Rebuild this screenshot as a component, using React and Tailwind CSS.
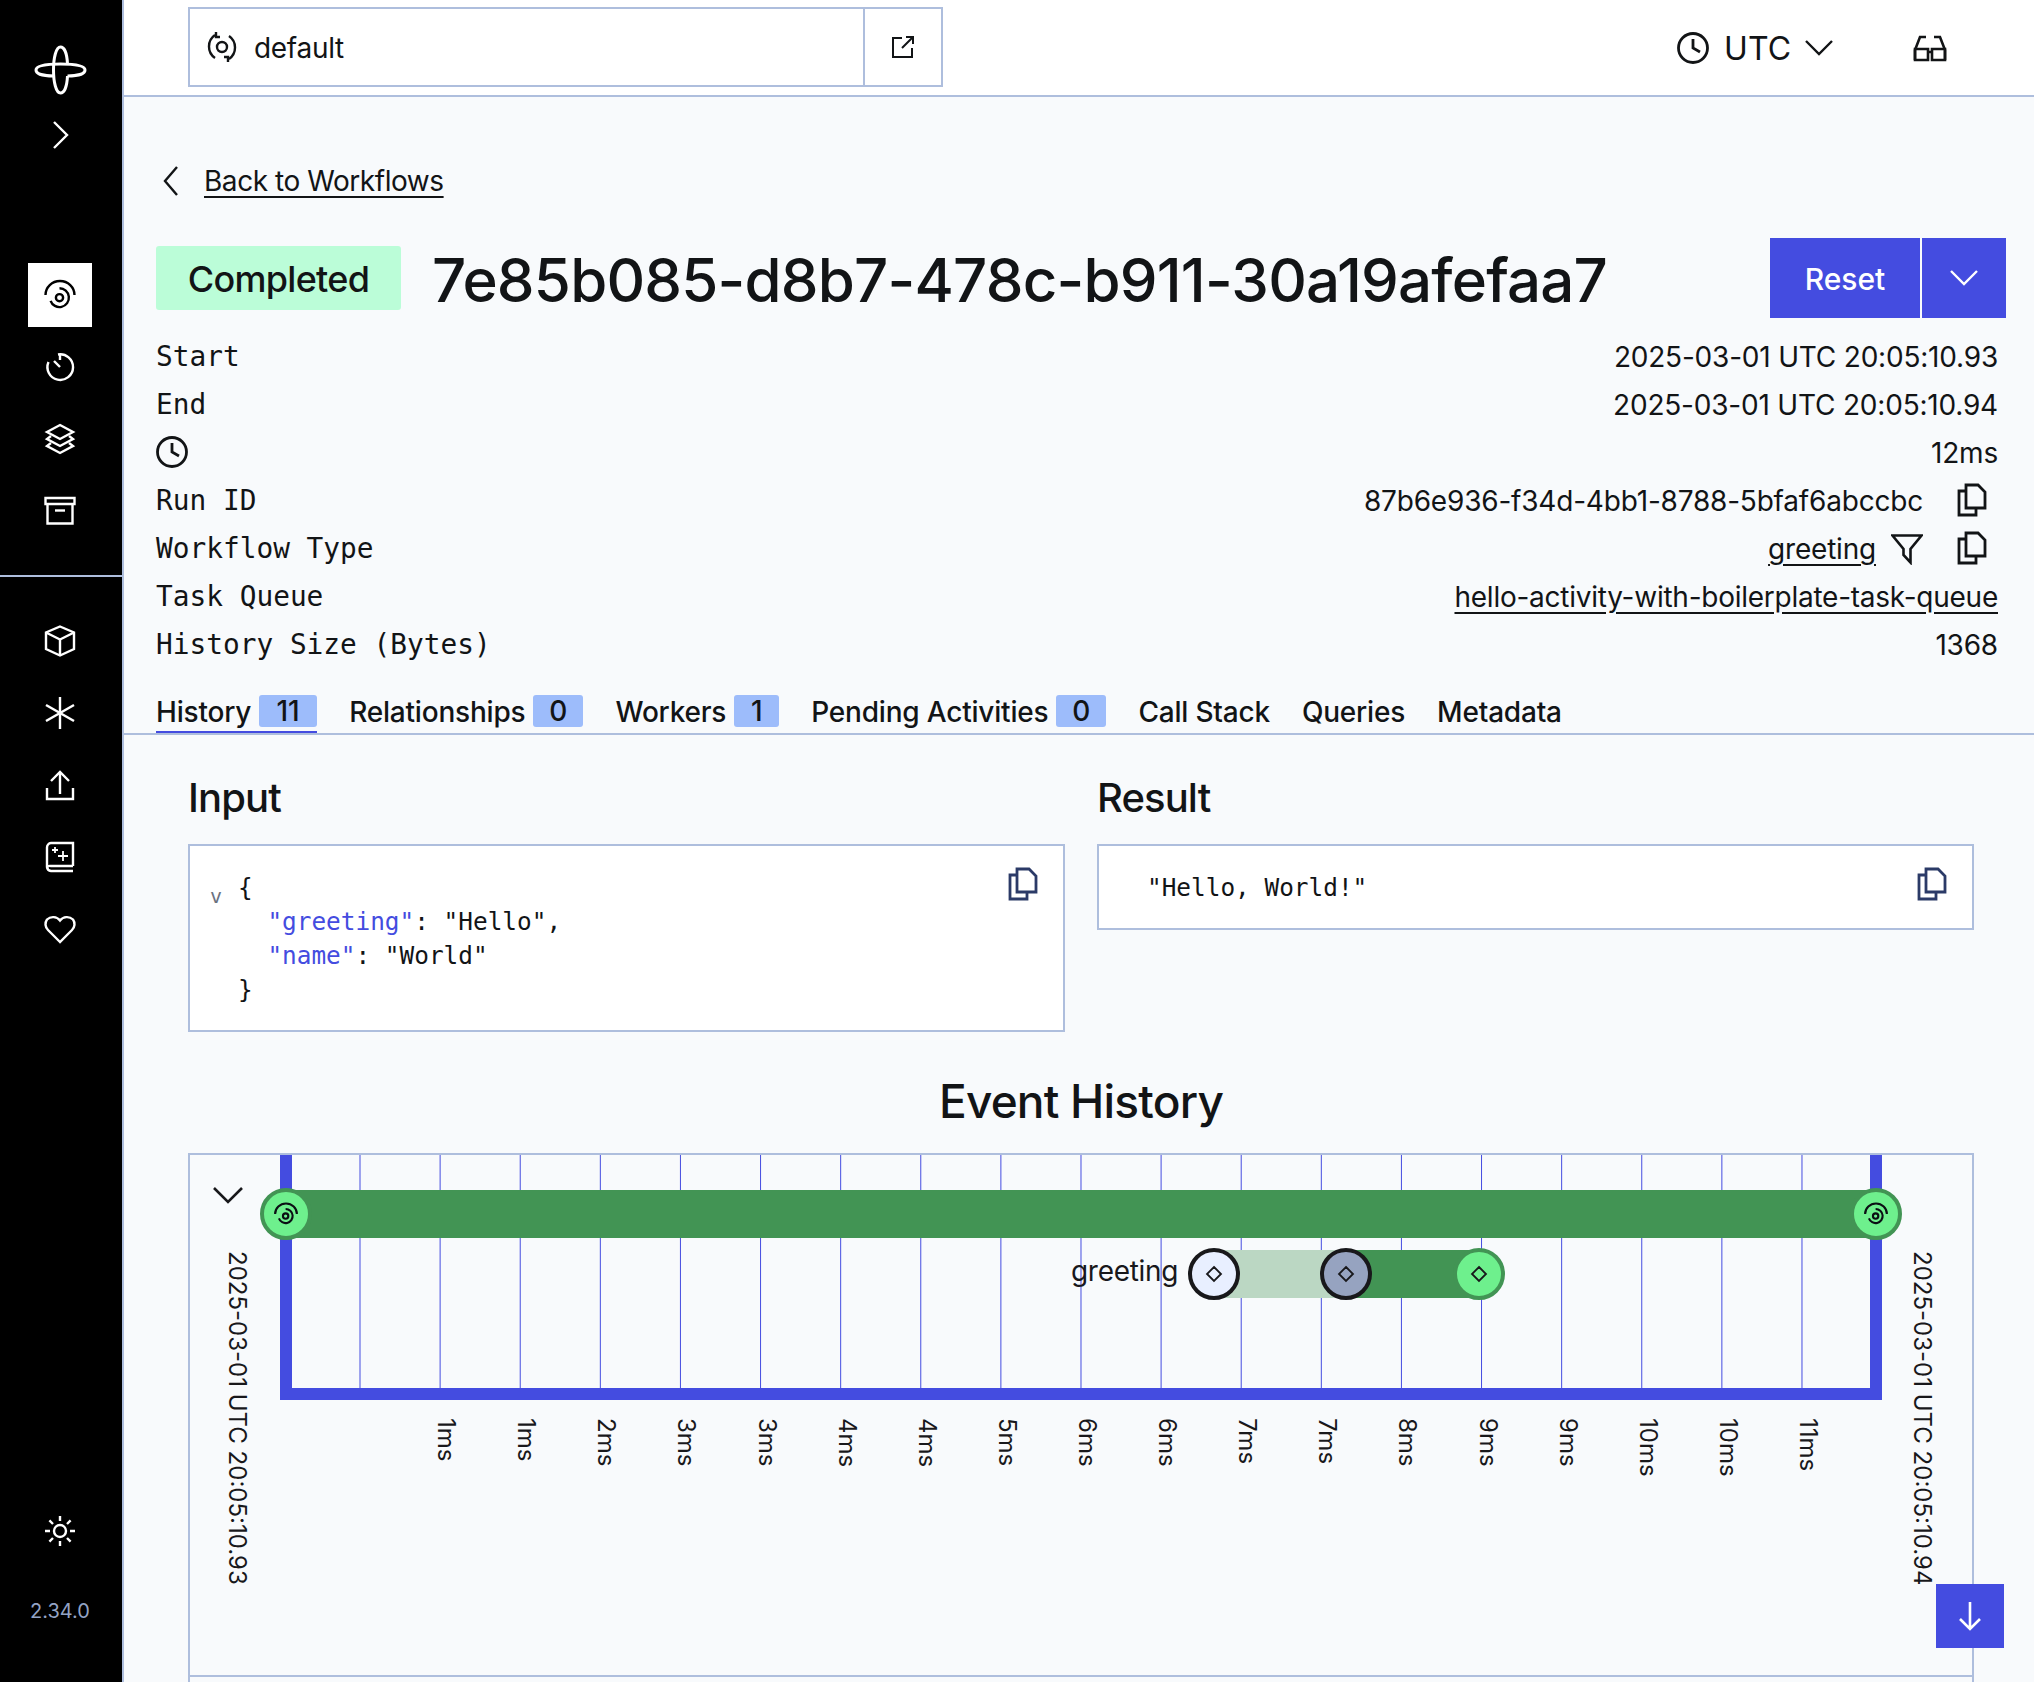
import React from "react";

const Icon = ({ size = 32, className = "", children }) => (
  <svg width={size} height={size} viewBox="0 0 32 32" fill="none" stroke="currentColor" strokeWidth="2.4" className={className}>
    {children}
  </svg>
);

// the spinning eye used for workflows
const SwirlPaths = () => (
  <>
    <circle cx="15.5" cy="18.7" r="3.6" />
    <path d="M15.5 9.3A9.4 9.4 0 1 1 6.6 21.8" />
    <path d="M1.5 16A14.5 14 0 0 1 30.5 16" />
  </>
);

const CopyIcon = ({ className = "" }) => (
  <svg width="30" height="34" viewBox="0 0 30 34" fill="none" stroke="currentColor" strokeWidth="2.8" className={className}>
    <path d="M9 2H21L28 9V25H9Z" />
    <path d="M9 8H2V32H19V26" />
  </svg>
);

const Chevron = ({ size = 32, dir = "down", className = "" }) => {
  const d = {
    down: "M3 9L16 22L29 9",
    right: "M10 3L23 16L10 29",
    left: "M22 2L10 16L22 30",
  }[dir];
  return (
    <Icon size={size} className={className}>
      <path d={d} />
    </Icon>
  );
};

const ClockIcon = ({ className = "" }) => (
  <Icon className={className}>
    <circle cx="16" cy="16" r="14.5" strokeWidth="2.8" />
    <path d="M16 7V16L23 20" strokeWidth="2.8" />
  </Icon>
);

const SideSlot = ({ active, children }) => (
  <div className="h-[72px] pr-[2px] flex items-center justify-center">
    <div className={`w-[64px] h-[64px] flex items-center justify-center ${active ? "bg-white text-black" : "text-white"}`}>
      {children}
    </div>
  </div>
);

const Sidebar = () => (
  <aside className="w-[124px] h-full shrink-0 bg-black border-r-2 border-[#aebedd] flex flex-col text-white">
    <div className="h-[60px] mt-[40px] pr-[2px] flex justify-center">
      <svg width="60" height="60" viewBox="0 0 60 60" fill="none" stroke="currentColor" strokeWidth="3">
        <path d="M37.5 24C37 14 34.5 7 30.5 7C26 7 23.5 18 23.5 30C23.5 42 26 53 30.5 53C34.5 53 37 46 37.5 36" />
        <path d="M23.5 36C14 36 6 34 6 30C6 26 14 24 30.5 24C47 24 55 26 55 30C55 34 47 36 37.5 36" />
      </svg>
    </div>
    <div className="mt-[19px] pr-[2px] flex justify-center">
      <Chevron dir="right" />
    </div>
    <div className="mt-[108px]">
      <SideSlot active>
        <Icon>
          <SwirlPaths />
        </Icon>
      </SideSlot>
      <SideSlot>
        <Icon>
          <path d="M14 3.5A12.8 12.8 0 1 1 4.5 11" />
          <path d="M10 10L16 16" />
          <path d="M16 3V9" />
        </Icon>
      </SideSlot>
      <SideSlot>
        <Icon>
          <path d="M16 2L29 9L16 16L3 9Z" />
          <path d="M7 13L3 16L16 23L29 16L25 13" />
          <path d="M7 20L3 23L16 30L29 23L25 20" />
        </Icon>
      </SideSlot>
      <SideSlot>
        <Icon>
          <path d="M1.5 3H30.5V9H1.5Z" />
          <path d="M3.5 9V28.5H28.5V9" />
          <path d="M11 15.5H21" />
        </Icon>
      </SideSlot>
    </div>
    <div className="mt-[28px] h-[2px] bg-[#aebedd]" />
    <div className="mt-[28px]">
      <SideSlot>
        <Icon>
          <path d="M16 1.5L30 7.5V24L16 30.5L2 24V7.5Z" />
          <path d="M2 7.5L16 14.5L30 7.5" />
          <path d="M16 14.5V30.5" />
        </Icon>
      </SideSlot>
      <SideSlot>
        <Icon>
          <path d="M16 0V32" />
          <path d="M2 8L30 24" />
          <path d="M30 8L2 24" />
        </Icon>
      </SideSlot>
      <SideSlot>
        <Icon>
          <path d="M3 19V30H29V19" />
          <path d="M16 25V3" />
          <path d="M7 12L16 3L25 12" />
        </Icon>
      </SideSlot>
      <SideSlot>
        <Icon>
          <path d="M29 25V2H7A4.5 4.5 0 0 0 3 6.5V26A4.5 4.5 0 0 0 7 30H29" />
          <path d="M3 26A4.5 4.5 0 0 1 7 25H29" />
          <path d="M11 6V12M8 9H14M19 10V20M14 15H24" strokeWidth="1.8" />
        </Icon>
      </SideSlot>
      <SideSlot>
        <Icon>
          <path d="M16 29L4 17A8 8 0 0 1 3 6.5A8.8 8.8 0 0 1 16 7.5A8.8 8.8 0 0 1 29 6.5A8 8 0 0 1 28 17Z" />
        </Icon>
      </SideSlot>
    </div>
    <div className="mt-auto pr-[2px] flex justify-center">
      <Icon>
        <circle cx="16" cy="16" r="6" />
        <path d="M16 1V6M16 26V31M1 16H6M26 16H31M5.4 5.4L9 9M23 23L26.6 26.6M5.4 26.6L9 23M23 9L26.6 5.4" />
      </Icon>
    </div>
    <p className="mt-[52px] mb-[59px] pr-[2px] text-center text-[20px] leading-[24px] text-[#93a3c4]">2.34.0</p>
  </aside>
);

const TopBar = () => (
  <header className="h-[97px] shrink-0 bg-white border-b-2 border-[#aebedd] flex items-start pl-[64px] pr-[87px]">
    <div className="mt-[7px] w-[755px] h-[80px] border-2 border-[#aebedd] flex">
      <div className="flex-1 flex items-center pl-[16px] gap-[16px]">
        <svg width="32" height="32" viewBox="0 0 32 32" fill="none" stroke="currentColor" strokeWidth="2.4">
          <circle cx="16" cy="16" r="5" />
          <path d="M9 4A14 14 0 0 0 9 27" />
          <path d="M23 5A14 14 0 0 1 23 28" />
          <path d="M10 1V6H14M22 31V26H18" />
        </svg>
        <span className="mt-[2px] text-[28px] leading-[36px] tracking-[-0.3px]">default</span>
      </div>
      <div className="w-[78px] border-l-2 border-[#aebedd] flex items-center justify-center">
        <svg width="24" height="24" viewBox="0 0 24 24" fill="none" stroke="currentColor" strokeWidth="2">
          <path d="M11 3H2V22H21V13" />
          <path d="M11 13L22 2M15 2H22V9" />
        </svg>
      </div>
    </div>
    <div className="ml-auto h-[95px] flex items-center">
      <ClockIcon className="mr-[1px]" />
      <span className="ml-[14px] mt-[2px] text-[32px] leading-[40px]">UTC</span>
      <Chevron size={32} className="ml-[12px]" />
      <svg width="34" height="28" viewBox="0 0 34 28" fill="none" stroke="currentColor" strokeWidth="2.6" className="ml-[78px]">
        <path d="M2 26V16L7 3H13M32 26V16L27 3H21" />
        <path d="M2 15H15V26H2ZM19 15H32V26H19ZM15 18H19" />
      </svg>
    </div>
  </header>
);

const DetailRow = ({ label, children }) => (
  <div className="h-[48px] flex items-center justify-between">
    {label}
    <div className="flex items-center">{children}</div>
  </div>
);

const Mono = ({ children }) => (
  <span className="font-['DejaVu_Sans_Mono',monospace] text-[27.8px] tracking-normal">{children}</span>
);

const Tab = ({ label, count, width, active }) => (
  <div className={`flex items-start gap-[8px] ${active ? "h-[38px] border-b-2 border-[#444ce0]" : "h-[32px]"}`}>
    <span className="mt-[1px] text-[28px] leading-[32px] font-medium tracking-[-0.2px]">{label}</span>
    {count !== undefined && (
      <span className={`h-[32px] ${width} text-center rounded-[3px] bg-[#9dbcfb] text-[28px] leading-[32px] font-medium`}>{count}</span>
    )}
  </div>
);

const CodeBox = ({ children, className = "" }) => (
  <div className={`border-2 border-[#aebedd] bg-white flex justify-between font-['DejaVu_Sans_Mono',monospace] text-[24.4px] leading-[34px] ${className}`}>
    {children}
  </div>
);

const ticks = ["1ms", "1ms", "2ms", "3ms", "3ms", "4ms", "4ms", "5ms", "6ms", "6ms", "7ms", "7ms", "8ms", "9ms", "9ms", "10ms", "10ms", "11ms"];
const gridX = [0, ...ticks.map((_, i) => i + 1)].map((i) => 360 + 80.11 * i);

const Diamond = ({ x, y }) => (
  <path d={`M${x} ${y - 7}L${x + 7} ${y}L${x} ${y + 7}L${x - 7} ${y}Z`} fill="none" stroke="#18181b" strokeWidth="1.8" />
);

const Swirl = ({ x, y }) => (
  <g transform={`translate(${x - 12} ${y - 12}) scale(0.75)`} fill="none" stroke="#0b0f14" strokeWidth="2.8">
    <SwirlPaths />
  </g>
);

const RotText = ({ x, y, children }) => (
  <text transform={`translate(${x} ${y}) rotate(90)`} fontSize="24" fill="#18181b" fontFamily="Inter, sans-serif">
    {children}
  </text>
);

// coordinates in this chart are the page's own pixels
const Timeline = () => (
  <svg viewBox="190 1155 1782 520" width="1782" height="520" className="block">
    {gridX.map((x) => (
      <line key={x} x1={x} x2={x} y1="1155" y2="1390" stroke="#444ce0" strokeWidth="1" />
    ))}
    <path d="M286 1155V1394H1876V1155" fill="none" stroke="#444ce0" strokeWidth="12" />

    <rect x="286" y="1190" width="1592" height="48" fill="#429454" />
    <circle cx="286" cy="1214" r="24" fill="#6ef08d" stroke="#429454" strokeWidth="4" />
    <Swirl x={286} y={1214} />
    <circle cx="1876" cy="1214" r="24" fill="#6ef08d" stroke="#429454" strokeWidth="4" />
    <Swirl x={1876} y={1214} />

    <text x="1071" y="1281" fontSize="28" letterSpacing="-0.3" fill="#18181b" fontFamily="Inter, sans-serif">greeting</text>
    <rect x="1214" y="1250" width="132" height="48" fill="#bbd7c3" />
    <rect x="1346" y="1250" width="133" height="48" fill="#429454" />
    <circle cx="1214" cy="1274" r="24" fill="#e8efff" stroke="#18181b" strokeWidth="4" />
    <Diamond x={1214} y={1274} />
    <circle cx="1346" cy="1274" r="24" fill="#96a3c0" stroke="#18181b" strokeWidth="4" />
    <Diamond x={1346} y={1274} />
    <circle cx="1479" cy="1274" r="24" fill="#6ef08d" stroke="#429454" strokeWidth="4" />
    <Diamond x={1479} y={1274} />

    {ticks.map((t, i) => (
      <RotText key={i} x={gridX[i + 1] - 2} y={1418}>{t}</RotText>
    ))}
    <RotText x={229} y={1251}>2025-03-01 UTC 20:05:10.93</RotText>
    <RotText x={1914} y={1251}>2025-03-01 UTC 20:05:10.94</RotText>
    <path d="M214 1188L228 1202L242 1188" fill="none" stroke="#18181b" strokeWidth="2.6" />
  </svg>
);

export default function App() {
  return (
    <div className="relative w-[2034px] h-[1682px] overflow-hidden flex bg-[#f8fafc] text-[#121416] font-['Inter',sans-serif]">
      <Sidebar />
      <main className="flex-1 min-w-0 flex flex-col">
        <TopBar />

        {/* workflow header */}
        <section className="pl-[32px] pr-[36px]">
          <a className="mt-[68px] h-[32px] flex items-center text-[28px] leading-[32px] tracking-[-0.45px]">
            <Chevron dir="left" className="mr-[17px] -ml-[1px]" />
            <span className="underline underline-offset-[5px]">Back to Workflows</span>
          </a>
          <div className="mt-[41px] -mr-[8px] h-[80px] flex items-center">
            <span className="pt-[2px] h-[64px] w-[245px] rounded-[3px] bg-[#bbfdd8] flex items-center justify-center text-[36px] font-medium tracking-[-0.7px]">Completed</span>
            <h1 className="mt-[3px] ml-[31px] text-[60px] leading-[72px] font-medium tracking-[-0.8px]">7e85b085-d8b7-478c-b911-30a19afefaa7</h1>
            <button className="ml-auto pt-[2px] w-[150px] h-[80px] bg-[#444ce0] text-white text-[30px] font-medium">Reset</button>
            <button className="ml-[2px] w-[84px] h-[80px] bg-[#444ce0] text-white flex items-center justify-center">
              <Chevron size={32} />
            </button>
          </div>

          <div className="mt-[15px] text-[28px] tracking-[-0.2px]">
            <DetailRow label={<Mono>Start</Mono>}>2025-03-01 UTC 20:05:10.93</DetailRow>
            <DetailRow label={<Mono>End</Mono>}>2025-03-01 UTC 20:05:10.94</DetailRow>
            <DetailRow label={<ClockIcon className="-mt-[3px]" />}>12ms</DetailRow>
            <DetailRow label={<Mono>Run ID</Mono>}>
              <span>87b6e936-f34d-4bb1-8788-5bfaf6abccbc</span>
              <CopyIcon className="ml-[34px] mr-[11px] -mt-[2px]" />
            </DetailRow>
            <DetailRow label={<Mono>Workflow Type</Mono>}>
              <span className="underline underline-offset-[5px]">greeting</span>
              <svg width="32" height="32" viewBox="0 0 32 32" fill="none" stroke="currentColor" strokeWidth="2.6" className="ml-[15px]">
                <path d="M1.5 2.5H30.5L19.5 16V29.5L12.5 22V16Z" />
              </svg>
              <CopyIcon className="ml-[34px] mr-[11px] -mt-[2px]" />
            </DetailRow>
            <DetailRow label={<Mono>Task Queue</Mono>}>
              <span className="underline underline-offset-[5px] tracking-[-0.25px]">hello-activity-with-boilerplate-task-queue</span>
            </DetailRow>
            <DetailRow label={<Mono>History Size (Bytes)</Mono>}>1368</DetailRow>
          </div>
        </section>

        {/* tabs */}
        <nav className="mt-[26px] h-[40px] shrink-0 pl-[32px] flex gap-[32px] border-b-2 border-[#aebedd]">
          <Tab label="History" count="11" width="w-[58px]" active />
          <Tab label="Relationships" count="0" width="w-[50px]" />
          <Tab label="Workers" count="1" width="w-[45px]" />
          <Tab label="Pending Activities" count="0" width="w-[50px]" />
          <Tab label="Call Stack" />
          <Tab label="Queries" />
          <Tab label="Metadata" />
        </nav>

        <section className="pl-[64px] pr-[60px]">
          <div className="mt-[41px] grid grid-cols-2 gap-[32px] items-start">
            <div>
              <h2 className="h-[44px] text-[40px] leading-[44px] font-medium tracking-[-0.9px]">Input</h2>
              <CodeBox className="mt-[24px] h-[188px] pt-[25px] pl-[20px] pr-[25px]">
                <div className="flex">
                  <span className="mt-[8px] w-[28px] text-[20px] text-[#6b7280]">v</span>
                  <div className="whitespace-pre">
                    <div>{"{"}</div>
                    <div>
                      {"  "}
                      <span className="text-[#444ce0]">"greeting"</span>: "Hello",
                    </div>
                    <div>
                      {"  "}
                      <span className="text-[#444ce0]">"name"</span>: "World"
                    </div>
                    <div>{"}"}</div>
                  </div>
                </div>
                <CopyIcon className="-mt-[4px] text-[#2b3a67]" />
              </CodeBox>
            </div>
            <div>
              <h2 className="h-[44px] text-[40px] leading-[44px] font-medium tracking-[-0.9px]">Result</h2>
              <CodeBox className="mt-[24px] h-[86px] pt-[25px] pl-[48px] pr-[25px]">
                <span>"Hello, World!"</span>
                <CopyIcon className="-mt-[4px] text-[#2b3a67]" />
              </CodeBox>
            </div>
          </div>

          <h2 className="mt-[41px] text-center text-[46px] leading-[56px] font-medium tracking-[-0.8px]">Event History</h2>
          <div className="mt-[24px] h-[600px] border-x-2 border-t-2 border-[#aebedd]">
            <Timeline />
            <div className="h-[2px] bg-[#aebedd]" />
          </div>
        </section>
      </main>

      <button className="absolute left-[1936px] top-[1584px] w-[68px] h-[64px] bg-[#444ce0] text-white flex items-center justify-center">
        <svg width="28" height="32" viewBox="0 0 28 32" fill="none" stroke="currentColor" strokeWidth="2.6">
          <path d="M14 2V29M4 19L14 29L24 19" />
        </svg>
      </button>
    </div>
  );
}
